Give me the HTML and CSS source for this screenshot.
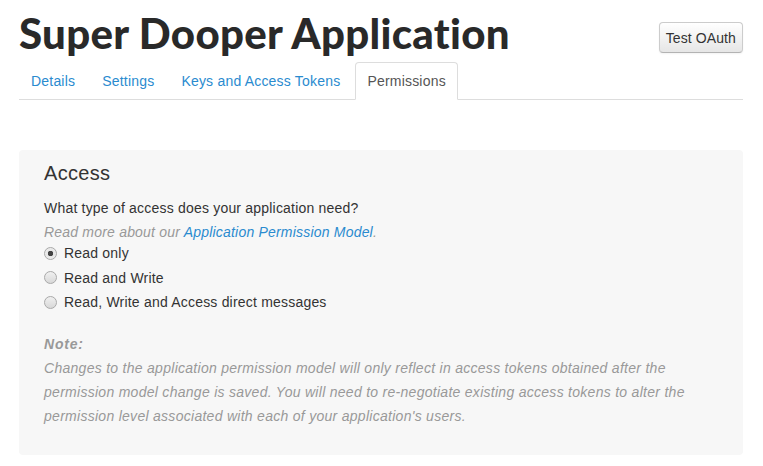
FILE: index.html
```html
<!DOCTYPE html>
<html>
<head>
<meta charset="utf-8">
<link rel="stylesheet" href="styles.css">
</head>
<body>
<div class="page">
  <header class="head">
    <h1 class="title">Super Dooper Application</h1>
    <button class="btn">Test OAuth</button>
  </header>
  <ul class="tabs">
    <li class="tab"><a>Details</a></li>
    <li class="tab"><a>Settings</a></li>
    <li class="tab"><a>Keys and Access Tokens</a></li>
    <li class="tab active"><a>Permissions</a></li>
  </ul>
  <section class="panel">
    <h2 class="panel-title">Access</h2>
    <p class="question">What type of access does your application need?</p>
    <p class="more">Read more about our <a class="link">Application Permission Model</a>.</p>
    <div class="radios">
      <label class="radio"><span class="dot checked"></span>Read only</label>
      <label class="radio"><span class="dot"></span>Read and Write</label>
      <label class="radio"><span class="dot"></span>Read, Write and Access direct messages</label>
    </div>
    <p class="note-label">Note:</p>
    <p class="note">Changes to the application permission model will only reflect in access tokens obtained after the permission model change is saved. You will need to re-negotiate existing access tokens to alter the permission level associated with each of your application's users.</p>
  </section>
</div>
</body>
</html>
```

FILE: styles.css
```css
* { box-sizing: border-box; }
html, body { margin: 0; padding: 0; background: #fff; }
body { font-family: "Liberation Sans", Arial, sans-serif; font-size: 14px; color: #333; letter-spacing: 0.2px; }
.page { padding: 0 20px 0 19px; }
.head { display: flex; justify-content: space-between; align-items: flex-start; height: 62px; }
.title {
  margin: 0; padding-top: 9px;
  font-family: "Lato", sans-serif; font-weight: 900; font-size: 42px; line-height: 48px;
  color: #292929; letter-spacing: 0.3px;
}
.btn {
  margin-top: 22px; height: 31px; padding: 0 6px;
  font-family: "Liberation Sans", Arial, sans-serif; font-size: 14px; color: #333; letter-spacing: 0.1px;
  background: linear-gradient(#fff, #e6e6e6);
  border: 1px solid #ccc; border-bottom-color: #b3b3b3; border-radius: 4px;
  box-shadow: inset 0 1px 0 rgba(255,255,255,.2), 0 1px 2px rgba(0,0,0,.05);
}
.tabs {
  list-style: none; margin: 0; padding: 0; display: flex;
  border-bottom: 1px solid #ddd; height: 38px;
}
.tab { margin-right: 2px; }
.tab a {
  display: block; height: 38px; line-height: 37px; padding: 0 12px 0 11px;
  color: #2a8bcf; border: 1px solid transparent; border-radius: 4px 4px 0 0;
}
.tab.active a {
  color: #555; background: #fff; border-color: #ddd; border-bottom-color: #fff; height: 38px;
  padding: 0 11px;
}
.panel {
  margin-top: 50px; background: #f7f7f7; border-radius: 4px;
  padding: 11px 25px 28px 25px; height: 305px;
}
.panel-title { margin: 0 0 11px; font-weight: normal; font-size: 20px; line-height: 24px; color: #333; letter-spacing: 0.3px; }
.question { margin: 0; line-height: 24px; }
.more { margin: 0; line-height: 24px; font-style: italic; color: #999; }
.link { color: #2a8bcf; }
.radios { margin-top: -3px; }
.radio { display: flex; align-items: center; line-height: 24px; height: 24.5px; }
.dot {
  width: 13px; height: 13px; border-radius: 50%; margin-right: 7px; flex: none;
  border: 1px solid #a9a9a9; background: linear-gradient(#f0f0f0, #d8d8d8);
}
.dot.checked { background: radial-gradient(circle, #444 0 2.5px, #e6e6e6 3px, #f2f2f2 100%); }
.note-label { margin: 17px 0 0; font-weight: bold; font-style: italic; color: #999; line-height: 24px; letter-spacing: 0.8px; }
.note { margin: 0; font-style: italic; color: #999; line-height: 24px; letter-spacing: 0.28px; }
```
